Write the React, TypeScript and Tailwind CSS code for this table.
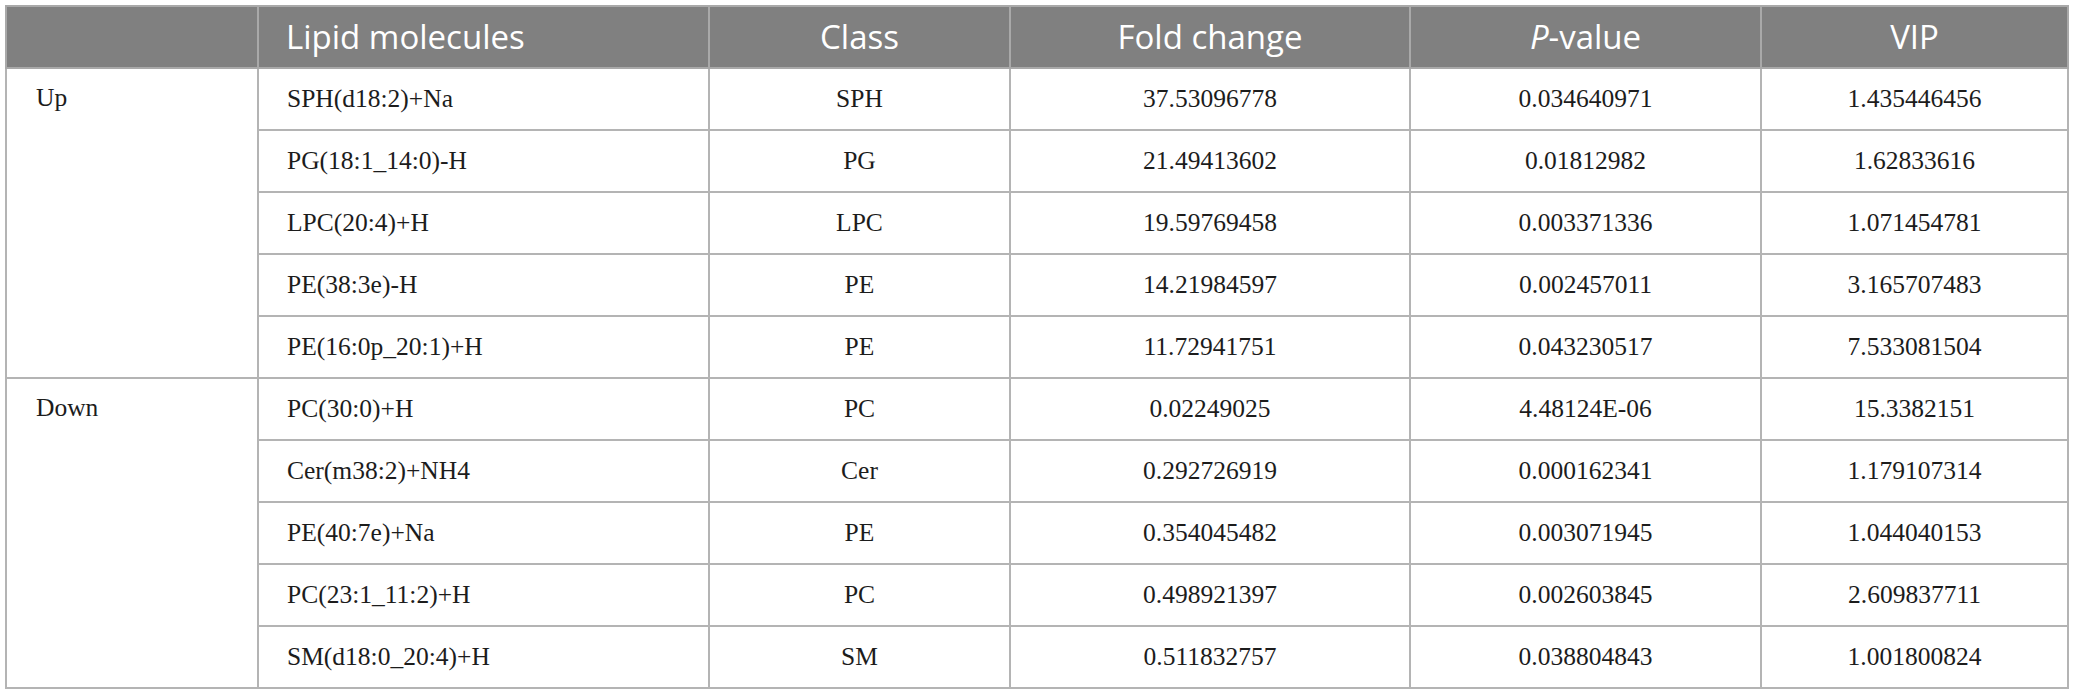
import React from "react";

const up = [
  ["SPH(d18:2)+Na", "SPH", "37.53096778", "0.034640971", "1.435446456"],
  ["PG(18:1_14:0)-H", "PG", "21.49413602", "0.01812982", "1.62833616"],
  ["LPC(20:4)+H", "LPC", "19.59769458", "0.003371336", "1.071454781"],
  ["PE(38:3e)-H", "PE", "14.21984597", "0.002457011", "3.165707483"],
  ["PE(16:0p_20:1)+H", "PE", "11.72941751", "0.043230517", "7.533081504"],
];
const down = [
  ["PC(30:0)+H", "PC", "0.02249025", "4.48124E-06", "15.3382151"],
  ["Cer(m38:2)+NH4", "Cer", "0.292726919", "0.000162341", "1.179107314"],
  ["PE(40:7e)+Na", "PE", "0.354045482", "0.003071945", "1.044040153"],
  ["PC(23:1_11:2)+H", "PC", "0.498921397", "0.002603845", "2.609837711"],
  ["SM(d18:0_20:4)+H", "SM", "0.511832757", "0.038804843", "1.001800824"],
];

const td = "border-2 border-[#b4b4b4] h-[62px] p-0";
const serif = { fontFamily: '"Liberation Serif", "Times New Roman", serif' };

function Group({ label, rows }: { label: string; rows: string[][] }) {
  return (
    <>
      {rows.map((r, i) => (
        <tr key={i}>
          {i === 0 && (
            <td rowSpan={rows.length} className={`${td} align-top pl-[29px]`}>
              <div className="h-[58px] flex items-center">{label}</div>
            </td>
          )}
          <td className={`${td} pl-[28px] text-left`}>{r[0]}</td>
          <td className={`${td} text-center`}>{r[1]}</td>
          <td className={`${td} text-center`}>{r[2]}</td>
          <td className={`${td} text-center`}>{r[3]}</td>
          <td className={`${td} text-center`}>{r[4]}</td>
        </tr>
      ))}
    </>
  );
}

export default function App() {
  const th =
    "border-2 border-[#a9a9a9] h-[62px] p-0 font-normal text-white bg-[#808080]";
  return (
    <div className="bg-white w-[2073px] h-[691px] pt-[5px] pl-[5px]">
      <table
        className="table-fixed border-collapse border-2 border-[#b4b4b4] w-[2062px] text-[25.5px] text-[#1c1c1c]"
        style={serif}
      >
        <colgroup>
          <col className="w-[252px]" />
          <col className="w-[451px]" />
          <col className="w-[301px]" />
          <col className="w-[400px]" />
          <col className="w-[351px]" />
          <col className="w-[307px]" />
        </colgroup>
        <thead
          className="text-[33px]"
          style={{ fontFamily: '"Open Sans", "Noto Sans", sans-serif' }}
        >
          <tr>
            <th className={th}></th>
            <th className={`${th} text-left pl-[27px]`}>Lipid molecules</th>
            <th className={`${th} text-center`}>Class</th>
            <th className={`${th} text-center`}>Fold change</th>
            <th className={`${th} text-center`}>
              <i>P</i>-value
            </th>
            <th className={`${th} text-center`}>VIP</th>
          </tr>
        </thead>
        <tbody>
          <Group label="Up" rows={up} />
          <Group label="Down" rows={down} />
        </tbody>
      </table>
    </div>
  );
}
